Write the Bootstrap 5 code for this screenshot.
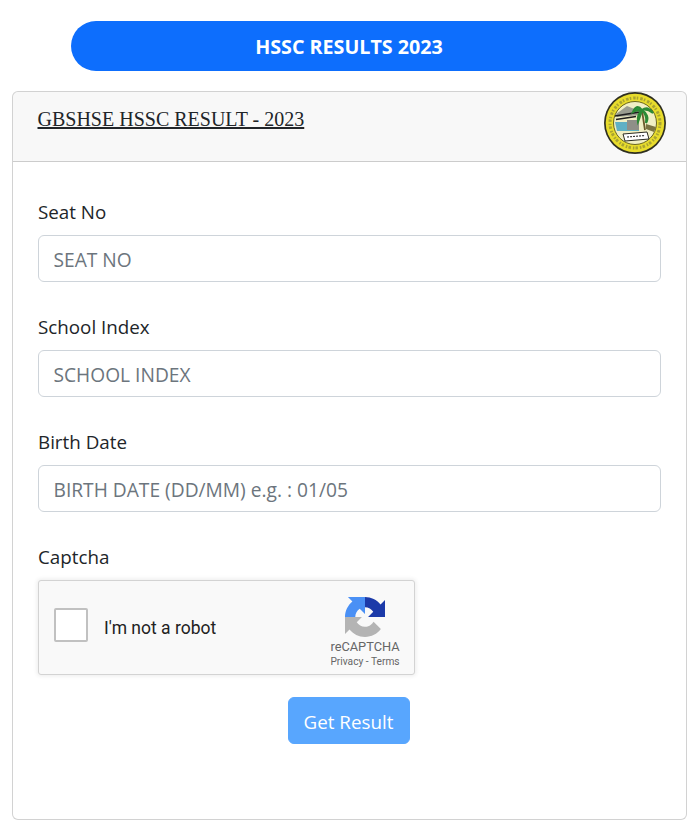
<!DOCTYPE html>
<html lang="en">
<head>
    <meta charset="UTF-8">
    <meta name="viewport" content="width=device-width, initial-scale=1">
    <title>HSSC Results 2023</title>
    <link href="https://cdn.jsdelivr.net/npm/bootstrap@5.3.0/dist/css/bootstrap.min.css" rel="stylesheet">
    <script src="https://cdn.jsdelivr.net/npm/bootstrap@5.3.0/dist/js/bootstrap.bundle.min.js"></script>
    <style>
        body {
            font-family: "Open Sans", sans-serif;
            color: #212529;
            padding: 21px 12px 5px 12px;
            height: 825px;
            overflow: hidden;
        }

        /* Top pill */
        .title-pill {
            width: 556px;
            height: 50px;
            margin: 0 auto 20px 59px;
            padding-top: 2px;
            border-radius: 25px;
            background-color: #0d6efd;
            color: #fff;
            font-size: 19.7px;
            font-weight: 700;
        }

        /* Result card */
        .result-card {
            width: 675px;
            height: 729px;
        }

        .result-card .card-header {
            height: 70px;
            padding: 0 19px 0 24.5px;
        }

        .result-title {
            font-family: "Liberation Serif", serif;
            font-size: 20px;
            line-height: 23px;
            margin-top: 16px;
            color: #212529;
            text-decoration: underline;
        }

        .seal {
            width: 64px;
            height: 64px;
            margin-top: -1px;
            filter: blur(.6px);
        }

        .result-card .card-body {
            padding: 38px 25px 0 25px;
        }

        .field-group {
            margin-bottom: 33px;
        }

        .field-group.last-field {
            margin-bottom: 22px;
        }

        .field-group .form-label {
            font-size: 18.8px;
            line-height: 24px;
            margin-bottom: 11px;
        }

        .field-group .form-control {
            height: 47px;
            font-size: 19.2px;
            padding: 2px 14.5px 0 14.5px;
            border-color: #ced4da;
        }

        .field-group .form-control::placeholder {
            color: #6c757d;
        }

        /* reCAPTCHA box */
        .captcha-box {
            width: 377px;
            height: 95px;
            background: #f9f9f9;
            border: 1px solid #d3d3d3;
            border-radius: 3px;
            box-shadow: 0 0 4px 1px rgba(0, 0, 0, .08);
            font-family: Roboto, sans-serif;
            color: #222;
            padding: 0 15px;
        }

        .captcha-check {
            width: 34px;
            height: 34px;
            background: #fff;
            border: 2px solid #c1c1c1;
            border-radius: 2px;
            margin: 0 16px 6px 0;
        }

        .captcha-text {
            font-size: 17.5px;
            padding-top: 2px;
        }

        .captcha-brand {
            width: 72px;
            padding-top: 9px;
            margin-right: -2px;
            color: #666;
        }

        .captcha-name {
            font-size: 12.8px;
            line-height: 14px;
            margin-top: 3px;
        }

        .captcha-links {
            font-size: 10.2px;
            line-height: 12px;
            margin-top: 2px;
            white-space: nowrap;
        }

        .submit-row {
            padding-right: 2px;
        }

        .submit-btn {
            width: 122px;
            height: 47px;
            font-size: 18.8px;
            background-color: #58a6fe;
            border-color: #58a6fe;
            color: #fff;
            opacity: 1;
            padding: 3px 0 0 0;
        }
    </style>
</head>
<body>

    <div class="title-pill d-flex align-items-center justify-content-center">HSSC RESULTS 2023</div>

    <div class="card result-card">
        <div class="card-header d-flex justify-content-between align-items-start">
            <div class="result-title">GBSHSE HSSC RESULT - 2023</div>
            <svg class="seal" viewBox="0 0 64 64" role="img" aria-label="Board seal">
                <circle cx="32" cy="32" r="31" fill="#2f2f20"/>
                <circle cx="32" cy="32" r="29.300" fill="#e8dc2c"/>
                <circle cx="32" cy="32" r="25" fill="none" stroke="#a9a332" stroke-width="3" stroke-dasharray="2.500 1.200 1.500 2"/>
                <circle cx="32" cy="32" r="21.500" fill="#f1efc4" stroke="#6a6620"/>
                <path d="M13 23 L24 15 L34 19 L39 24 L14 26Z" fill="#9a9d90"/>
                <path d="M12 25 L37 21 M13 28.500 L33 25.500" stroke="#1e1e1e" stroke-width="1.700"/>
                <path d="M12 31 H36 V40 H14Z" fill="#5fb0c4"/>
                <path d="M24 29 H36 V39 H24Z" fill="#8f8f88"/>
                <path d="M42 39 C41 32 40 27 39 19" stroke="#6b5a2a" stroke-width="1.800" fill="none"/>
                <path d="M39 19 C35 14 32 16 30 21 C33 19 36 19 39 19 C36 21 34 26 35 31 C37 26 38 22 39 19 C42 22 44 27 43 32 C46 27 44 22 39 19 C43 16 47 17 50 22 C46 19 42 18 39 19Z" fill="#2f9a3c" stroke="#2c8a35" stroke-width="2"/>
                <path d="M43 33 L53 36 L51 41 L43 38Z" fill="#7a7342"/>
                <path d="M20 43 L44 41 L46 48 L22 50Z" fill="#fff" stroke="#2b2b22"/>
                <path d="M24 46 L42 44.500" stroke="#333" stroke-width="1.200" stroke-dasharray="2 1"/>
            </svg>
        </div>
        <div class="card-body">
            <form onsubmit="return false">
                <div class="field-group">
                    <label class="form-label" for="seatNo">Seat No</label>
                    <input class="form-control" id="seatNo" type="text" placeholder="SEAT NO">
                </div>
                <div class="field-group">
                    <label class="form-label" for="schoolIndex">School Index</label>
                    <input class="form-control" id="schoolIndex" type="text" placeholder="SCHOOL INDEX">
                </div>
                <div class="field-group">
                    <label class="form-label" for="birthDate">Birth Date</label>
                    <input class="form-control" id="birthDate" type="text" placeholder="BIRTH DATE (DD/MM) e.g. : 01/05">
                </div>
                <div class="field-group last-field">
                    <label class="form-label">Captcha</label>
                    <div class="captcha-box d-flex align-items-center">
                        <div class="captcha-check flex-shrink-0"></div>
                        <div class="captcha-text flex-grow-1">I'm not a robot</div>
                        <div class="captcha-brand d-flex flex-column align-items-center text-center">
                            <svg width="40" height="40" viewBox="0 0 64 64" aria-hidden="true">
                                <path fill="#b4b4b4" d="M0 32 V59.300 L7.200 52.150 C13.100 59.300 22 64 32 64 C42.400 64 51.600 59 57.400 51.300 L45.700 39.400 C44.500 41.600 42.900 43.300 40.900 44.700 C38.900 46.300 36 47.600 32 47.600 C26.500 47.600 21.500 44.700 18.800 40.400 L27.100 32Z"/>
                                <path fill="#4a90f5" d="M32 27.100 V0 H4.700 L11.850 7.200 C4.700 13.100 0 22 0 32 H16.400 C16.400 26.500 19.300 21.500 23.600 18.800Z"/>
                                <path fill="#1c3aa9" d="M32 0 C42 0 50.900 4.700 56.800 11.850 L64 4.700 V32 H36.900 L45.200 23.600 C42.500 19.300 37.500 16.400 32 16.400Z"/>
                            </svg>
                            <div class="captcha-name">reCAPTCHA</div>
                            <div class="captcha-links">Privacy - Terms</div>
                        </div>
                    </div>
                </div>
                <div class="submit-row d-flex justify-content-center">
                    <button class="btn submit-btn" type="submit">Get Result</button>
                </div>
            </form>
        </div>
    </div>

</body>
</html>
